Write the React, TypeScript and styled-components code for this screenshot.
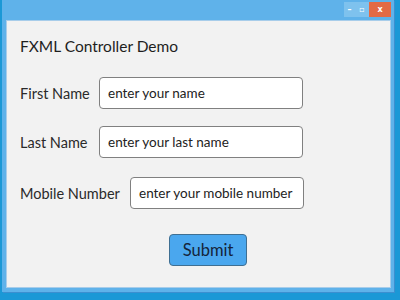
import React from 'react';
import styled, { createGlobalStyle } from 'styled-components';

const GlobalStyle = createGlobalStyle`
  html, body {
    margin: 0;
    padding: 0;
    width: 400px;
    height: 300px;
    overflow: hidden;
    background: #1b98d6;
    font-family: Lato, "Noto Sans", sans-serif;
  }
`;

const Window = styled.div`
  margin-left: 2px;
  width: 392px;
  height: 292px;
  background: #5fb2ea;
  box-shadow: 1px 1px 0 #3c8fd0;
  display: flex;
  flex-direction: column;
  padding: 0 3px 4px 4px;
  box-sizing: border-box;
`;

const TitleBar = styled.div`
  height: 20px;
  display: flex;
  justify-content: flex-end;
  align-items: flex-start;
  padding-top: 2px;
  box-sizing: border-box;
`;

const CaptionButton = styled.div<{ close?: boolean; wide?: number }>`
  width: ${({ wide }) => wide ?? 15}px;
  height: 15px;
  background: ${({ close }) => (close ? '#e36a45' : '#7ec2ee')};
  display: flex;
  align-items: center;
  justify-content: center;
  color: #fff;
  font-size: 8px;
  font-family: "DejaVu Sans", sans-serif;
  font-weight: bold;
`;

const Content = styled.div`
  flex: 1;
  background: #f2f2f2;
  border: 1px solid #a8cdea;
  padding: 14px 14px 0 13px;
  display: flex;
  flex-direction: column;
`;

const Heading = styled.h1`
  margin: 0 0 20px 0;
  font-size: 15.5px;
  font-weight: normal;
  color: #1e1e1e;
  line-height: 22px;
`;

const Row = styled.div`
  display: flex;
  align-items: center;
  gap: 10px;
  margin-bottom: 17px;
  &:nth-of-type(3) {
    margin-top: 2px;
  }
`;

const Label = styled.label<{ w: number }>`
  width: ${({ w }) => w}px;
  font-size: 14.5px;
  color: #2a2a2a;
  white-space: nowrap;
`;

const Input = styled.input<{ w: number }>`
  width: ${({ w }) => w}px;
  height: 32px;
  box-sizing: border-box;
  border: 1px solid #808080;
  border-radius: 4px;
  background: #fff;
  padding: 0 8px;
  font-family: inherit;
  font-size: 13.5px;
  color: #222;
  outline: none;
  &::placeholder {
    color: #222;
  }
`;

const SubmitButton = styled.button`
  align-self: flex-start;
  margin: 8px 0 0 149px;
  width: 78px;
  height: 32px;
  background: #4aa7ee;
  border: 1px solid #3f6f92;
  border-radius: 4px;
  font-family: inherit;
  font-size: 16.5px;
  color: #14243a;
  padding: 0;
`;

export default function App() {
  return (
    <>
      <GlobalStyle />
      <Window>
        <TitleBar>
          <CaptionButton wide={11}>–</CaptionButton>
          <CaptionButton wide={14}>▫</CaptionButton>
          <CaptionButton close wide={22}>x</CaptionButton>
        </TitleBar>
        <Content>
          <Heading>FXML Controller Demo</Heading>
          <Row>
            <Label w={69}>First Name</Label>
            <Input w={204} placeholder="enter your name" />
          </Row>
          <Row>
            <Label w={69}>Last Name</Label>
            <Input w={204} placeholder="enter your last name" />
          </Row>
          <Row>
            <Label w={100}>Mobile Number</Label>
            <Input w={174} placeholder="enter your mobile number" />
          </Row>
          <SubmitButton>Submit</SubmitButton>
        </Content>
      </Window>
    </>
  );
}
